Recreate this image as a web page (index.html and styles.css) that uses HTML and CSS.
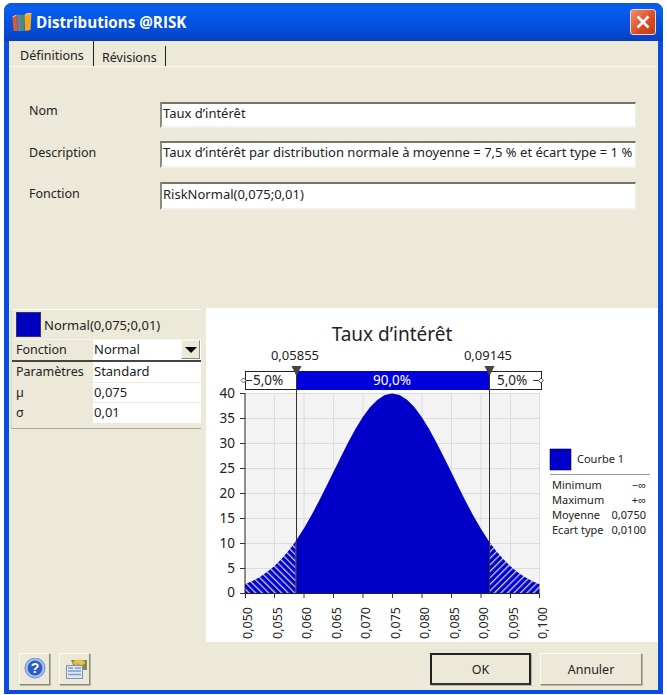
FILE: index.html
```html
<!DOCTYPE html>
<html lang="fr">
<head>
<meta charset="utf-8">
<title>Distributions @RISK</title>
<link rel="stylesheet" href="styles.css">
</head>
<body>
<div class="window">
  <div class="titlebar">
    <svg class="appicon" viewBox="0 0 20 19" width="20" height="19">
      <path d="M0.5 4 L4.5 2 L5.5 18 L1.5 18 Z" fill="#e0582e"/>
      <path d="M5 2 L9 1.5 L9 18 L5.5 18 Z" fill="#6f7f92"/>
      <path d="M9 2 L12.5 1.5 L12.5 18 L9 18 Z" fill="#3f8f7c"/>
      <path d="M12.5 2 L15.5 0 L19.5 0 L18.5 17 L13 18 Z" fill="#f7a51f"/>
      <path d="M0.5 4 L4.5 2 M13 2 L15.5 0.5 H19" stroke="#fbd79a" fill="none"/>
    </svg>
    <span class="title">Distributions @RISK</span>
    <button class="close" aria-label="Fermer">
      <svg viewBox="0 0 16 16" width="16" height="16"><path d="M2.5 2.5 L13.5 13.5 M13.5 2.5 L2.5 13.5" stroke="#fff" stroke-width="2.6" fill="none"/></svg>
    </button>
  </div>
  <div class="client">
    <div class="tabs">
      <div class="tab tab-active">Définitions</div>
      <div class="tab tab-other">Révisions</div>
    </div>
    <div class="form">
      <div class="label label-first">Nom</div>
      <div class="field field-a">Taux d’intérêt</div>
      <div class="label">Description</div>
      <div class="field field-b">Taux d’intérêt par distribution normale à moyenne = 7,5 % et écart type = 1 %</div>
      <div class="label">Fonction</div>
      <div class="field field-c">RiskNormal(0,075;0,01)</div>
    </div>
    <div class="lower">
      <div class="side">
        <div class="grid-box">
          <div class="head"><span class="swatch"></span><span>Normal(0,075;0,01)</span></div>
          <div class="row row-fn">
            <div class="cell-l">Fonction</div>
            <div class="cell-v cell-select">Normal<span class="drop"><span class="tri"></span></span></div>
          </div>
          <div class="row"><div class="cell-l">Paramètres</div><div class="cell-v">Standard</div></div>
          <div class="row"><div class="cell-l">µ</div><div class="cell-v">0,075</div></div>
          <div class="row"><div class="cell-l">σ</div><div class="cell-v">0,01</div></div>
        </div>
      </div>
      <div class="chart">
        <svg class="plot" viewBox="206 308 452 334" width="452" height="334">
          <defs>
            <pattern id="hl" width="4.6" height="4.6" patternUnits="userSpaceOnUse" patternTransform="rotate(-45)">
              <rect width="4.6" height="4.6" fill="#0000c8"/><rect width="1.3" height="4.6" fill="#c4c8f4"/>
            </pattern>
            <pattern id="hr" width="4.6" height="4.6" patternUnits="userSpaceOnUse" patternTransform="rotate(45)">
              <rect width="4.6" height="4.6" fill="#0000c8"/><rect width="1.3" height="4.6" fill="#c4c8f4"/>
            </pattern>
          </defs>
          <text class="t-title" x="392" y="341" text-anchor="middle">Taux d’intérêt</text>
          <text class="t-mk" x="295" y="360" text-anchor="middle">0,05855</text>
          <text class="t-mk" x="488" y="360" text-anchor="middle">0,09145</text>

          <rect x="245" y="393" width="294.5" height="200" fill="#f3f3f3"/>
          <path class="gridl" d="M245 393.5H540M245 418.5H540M245 443.5H540M245 468.5H540M245 493.5H540M245 518.5H540M245 543.5H540M245 568.5H540"/>
          <path class="gridl" d="M274.5 393V593M304 393V593M333.5 393V593M363 393V593M392.5 393V593M422 393V593M451.5 393V593M481 393V593M510.5 393V593M539.5 393V593"/>

          <path fill="url(#hl)" d="M245 593V584.2L252.4 581.1L259.8 577.1L267 572.1L274.5 566L281.9 558.6L289.2 549.9L295.4 541.4V593Z"/>
          <path fill="url(#hr)" d="M489.1 593V541.4L495.4 549.9L502.7 558.6L510 566L517.4 572.1L524.8 577.1L532.1 581.1L539.5 584.2V593Z"/>
          <path fill="#0000c8" d="M295.4 593V541.4L296.6 539.7L304 528.2L311.3 515.4L318.6 501.7L326 487.1L333.4 472L340.8 457L348.1 442.4L355.4 428.9L362.8 417L370.2 407.1L377.5 399.7L384.9 395.1L392.25 393.5L399.6 395.1L407 399.7L414.3 407.1L421.7 417L429.1 428.9L436.4 442.4L443.8 457L451.2 472L458.5 487.1L465.9 501.7L473.2 515.4L480.6 528.2L487.9 539.7L489.1 541.4V593Z"/>

          <path class="axis" d="M245 393V593.5H540"/>
          <path class="tick" d="M240 393.5H245M240 418.5H245M240 443.5H245M240 468.5H245M240 493.5H245M240 518.5H245M240 543.5H245M240 568.5H245M240 593.5H245"/>
          <path class="tick" d="M245.5 593V598M274.5 593V598M304 593V598M333.5 593V598M363 593V598M392.5 593V598M422 593V598M451.5 593V598M481 593V598M510.5 593V598M539.5 593V598"/>

          <text class="t-yl" x="235" y="398" text-anchor="end">40</text>
          <text class="t-yl" x="235" y="423" text-anchor="end">35</text>
          <text class="t-yl" x="235" y="448" text-anchor="end">30</text>
          <text class="t-yl" x="235" y="473" text-anchor="end">25</text>
          <text class="t-yl" x="235" y="498" text-anchor="end">20</text>
          <text class="t-yl" x="235" y="523" text-anchor="end">15</text>
          <text class="t-yl" x="235" y="548" text-anchor="end">10</text>
          <text class="t-yl" x="235" y="573" text-anchor="end">5</text>
          <text class="t-yl" x="235" y="597" text-anchor="end">0</text>

          <g class="t-ax">
            <text transform="translate(252 639) rotate(-90)">0,050</text>
            <text transform="translate(281.5 639) rotate(-90)">0,055</text>
            <text transform="translate(311 639) rotate(-90)">0,060</text>
            <text transform="translate(340.5 639) rotate(-90)">0,065</text>
            <text transform="translate(370 639) rotate(-90)">0,070</text>
            <text transform="translate(399.5 639) rotate(-90)">0,075</text>
            <text transform="translate(429 639) rotate(-90)">0,080</text>
            <text transform="translate(458.5 639) rotate(-90)">0,085</text>
            <text transform="translate(488 639) rotate(-90)">0,090</text>
            <text transform="translate(517.5 639) rotate(-90)">0,095</text>
            <text transform="translate(547 639) rotate(-90)">0,100</text>
          </g>

          <rect x="245.5" y="371.5" width="296" height="18" fill="#fff" stroke="#222"/>
          <rect x="296" y="371" width="193" height="19" fill="#0000dc"/>
          <text class="t-bar t-white" x="392" y="385" text-anchor="middle">90,0%</text>
          <text class="t-bar" x="253" y="385">5,0%</text>
          <text class="t-bar" x="497" y="385">5,0%</text>
          <path class="tick" d="M243 380.5H252M533 380.5H541"/>
          <path d="M243.5 378L246 380.5L243.5 383L241 380.5Z M541 378L543.5 380.5L541 383L538.5 380.5Z" fill="#fff" stroke="#333" stroke-width=".8"/>
          <path class="marker" d="M296.5 371V593M489.5 371V593"/>
          <path d="M291.5 366H301.5L296.5 376Z M484.5 366H494.5L489.5 376Z" fill="#444"/>

          <rect x="550" y="449" width="21" height="21" fill="#0000c8" stroke="#000050" stroke-width=".6"/>
          <text class="t-leg" x="577" y="463">Courbe 1</text>
          <path d="M550 474.5H650" stroke="#999"/>
          <text class="t-leg" x="552" y="489">Minimum</text><text class="t-leg" x="646" y="489" text-anchor="end">−∞</text>
          <text class="t-leg" x="552" y="504">Maximum</text><text class="t-leg" x="646" y="504" text-anchor="end">+∞</text>
          <text class="t-leg" x="552" y="519">Moyenne</text><text class="t-leg" x="646" y="519" text-anchor="end">0,0750</text>
          <text class="t-leg" x="552" y="534">Ecart type</text><text class="t-leg" x="646" y="534" text-anchor="end">0,0100</text>
        </svg>
      </div>
    </div>
    <div class="footer">
      <button class="btn btn-icon" aria-label="Aide">
        <svg viewBox="0 0 22 22" width="22" height="22">
          <circle cx="11" cy="10" r="10" fill="#a5bfec" stroke="#6c8fd2"/>
          <circle cx="11" cy="10" r="7.4" fill="#2a5cc8"/>
          <text class="t-q" x="11" y="15" text-anchor="middle">?</text>
        </svg>
      </button>
      <button class="btn btn-icon btn-second" aria-label="Propriétés">
        <svg viewBox="0 0 24 22" width="24" height="22">
          <path d="M8 2H24V12H12Z" fill="#7f8c4e"/>
          <ellipse cx="16" cy="4.5" rx="6" ry="3" fill="#e8bd4a"/>
          <path d="M13 5L20 8L16 10Z" fill="#c09a3a"/>
          <rect x="3.5" y="7.5" width="16" height="13" fill="#dfe7f2" stroke="#7f93b5"/>
          <path d="M5 10H10M12 10H18M5 13H18M5 16.5H18" stroke="#7f9dcf" stroke-width="1.6"/>
        </svg>
      </button>
      <span class="spacer"></span>
      <button class="btn btn-ok">OK</button>
      <button class="btn btn-cancel">Annuler</button>
    </div>
  </div>
</div>
</body>
</html>
```
FILE: styles.css
```css
* { box-sizing: border-box; }
html, body { margin: 0; padding: 0; background: #fff; }
body { padding: 3px 4px 1px 4px; width: 667px; height: 695px; font-family: "Noto Sans", "DejaVu Sans", sans-serif; font-size: 12.5px; color: #222; }
.window { width: 659px; height: 691px; display: flex; flex-direction: column; background: #0a4be0; border-radius: 8px 8px 0 0; overflow: hidden; }
.titlebar { height: 38px; flex: none; display: flex; align-items: center; padding: 0 7px 0 8px; background: linear-gradient(#0a57e4 0, #0a5ff0 15%, #0455e4 45%, #0447cf 85%, #0a3fb8 100%); }
.appicon { flex: none; margin-right: 4px; }
.title { flex: 1; font-family: "Open Sans", "DejaVu Sans", sans-serif; font-weight: 700; font-size: 15.2px; color: #fff; }
.close { width: 26px; height: 26px; padding: 0; display: flex; align-items: center; justify-content: center; border: 1px solid #f0d8d0; border-radius: 3px; background: linear-gradient(135deg, #f0906a, #d84a22 60%, #c23a18); }
.client { flex: 1; margin: 0 5px 4px 5px; display: flex; flex-direction: column; background: #ece9d8; min-height: 0; }
.tabs { height: 26px; flex: none; display: flex; border-bottom: 1px solid #f8f7f0; }
.tab { display: flex; align-items: center; height: 25px; }
.tab-active { width: 85px; padding: 3px 0 0 11px; border-right: 1px solid #222; }
.tab-other { width: 72px; padding-left: 8px; padding-top: 3px; margin-top: 5px; height: 20px; border-right: 1px solid #222; }
.form { height: 241px; flex: none; padding: 35px 22px 0 20px; display: grid; grid-template-columns: 131px 476px; grid-template-rows: 39px 41px 28px; }
.label { padding-top: 1px; display: flex; align-items: center; height: 22px; }
.label-first { margin-top: -3px; }
.field { background: #fff; border-top: 2px solid #77746a; border-left: 2px solid #8d8a80; border-bottom: 2px solid #f4f2e8; border-right: 1px solid #f4f2e8; padding: 0 0 0 1px; font-size: 13px; line-height: 19px; white-space: nowrap; overflow: hidden; }
.field-a { height: 26px; }
.field-b { height: 27px; }
.field-c { height: 28px; padding-top: 1px; }
.lower { height: 334px; flex: none; display: flex; }
.side { width: 197px; flex: none; padding: 1px 5px 0 2px; }
.grid-box { height: 120px; border-top: 1px solid #fdfcf6; border-left: 1px solid #d8d5c4; border-bottom: 1px solid #a8a698; font-size: 12.5px; }
.head { height: 30px; display: flex; align-items: center; gap: 3px; padding-left: 4px; border-bottom: 1px solid #f4f2e8; font-size: 13px; }
.swatch { width: 25px; height: 25px; background: #0000c0; border: 1px solid #33336e; }
.row { display: grid; grid-template-columns: 81px 1fr; height: 20.5px; }
.row-fn { height: 22px; }
.cell-l { padding-left: 4px; line-height: 19px; }
.row-fn .cell-l { border-bottom: 2px solid #444; }
.cell-v { background: #fff; padding-left: 1px; font-size: 13px; line-height: 19px; border-bottom: 1px solid #ece9d8; }
.cell-select { display: flex; justify-content: space-between; border-bottom: 2px solid #444; padding-right: 1px; }
.drop { width: 19px; height: 19px; display: flex; align-items: center; justify-content: center; background: #ece9d8; border: 1px solid #f8f7f0; border-right-color: #888; border-bottom-color: #888; }
.tri { width: 0; height: 0; border-left: 6px solid transparent; border-right: 6px solid transparent; border-top: 6px solid #000; }
.chart { flex: 1; background: #fff; min-width: 0; }
.plot { display: block; }
.gridl { stroke: #dcdcdc; fill: none; }
.axis { stroke: #222; fill: none; }
.tick { stroke: #333; fill: none; }
.marker { stroke: #333; fill: none; }
.t-title { font-family: "Noto Sans", sans-serif; font-size: 19px; fill: #222; }
.t-ax { font-family: "Noto Sans", sans-serif; font-size: 12.5px; fill: #222; }
.t-mk { font-family: "Noto Sans", sans-serif; font-size: 13px; fill: #222; }
.t-yl { font-family: "Noto Sans", sans-serif; font-size: 13.5px; fill: #222; }
.t-bar { font-family: "Noto Sans", sans-serif; font-size: 13.5px; fill: #222; }
.t-white { fill: #fff; }
.t-leg { font-family: "Noto Sans", sans-serif; font-size: 11px; fill: #222; }
.t-q { font-family: "Liberation Sans", sans-serif; font-size: 14px; font-weight: 700; fill: #fff; }
.footer { flex: 1; display: flex; align-items: flex-start; padding: 11px 16px 0 10px; }
.spacer { flex: 1; }
.btn { height: 32px; font-family: "Noto Sans", sans-serif; font-size: 12.5px; color: #222; background: #ece9d8; padding: 0; display: flex; align-items: center; justify-content: center; border: 1px solid; border-color: #fbfaf2 #8a8778 #8a8778 #fbfaf2; box-shadow: 1px 1px 0 #b8b5a6; }
.btn-icon { width: 31px; }
.btn-second { margin-left: 9px; }
.btn-ok { width: 101px; border: 2px solid; border-color: #222 #222 #333 #222; }
.btn-cancel { width: 102px; margin-left: 9px; }
```
